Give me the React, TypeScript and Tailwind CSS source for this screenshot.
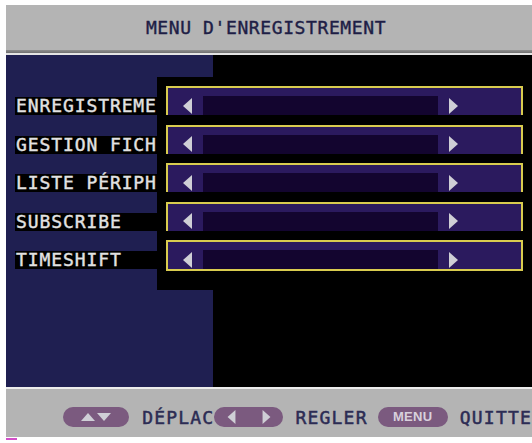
const rows = ['ENREGISTREME', 'GESTION FICH', 'LISTE PÉRIPH', 'SUBSCRIBE', 'TIMESHIFT']

function Arrow({ dir, className }: { dir: 'left' | 'right' | 'up' | 'down'; className?: string }) {
  const points = {
    left: '9,0 0,8 9,16',
    right: '0,0 9,8 0,16',
    up: '0,8 7,0 14,8',
    down: '0,0 14,0 7,8',
  }[dir]
  const vertical = dir === 'up' || dir === 'down'
  return (
    <svg
      className={className}
      width={vertical ? 14 : 9}
      height={vertical ? 8 : 16}
      viewBox={vertical ? '0 0 14 8' : '0 0 9 16'}
    >
      <polygon points={points} fill="#cfcfd6" />
    </svg>
  )
}

function Slider({ last }: { last: boolean }) {
  return (
    <div
      className={`flex h-[29px] w-[357px] flex-col border-2 border-[#d9cc4f] bg-[#2b1a5e] ${
        last ? 'h-[31px]' : 'border-b-0'
      }`}
    >
      <div className="mt-[8px] flex h-[19px]">
        <div className="flex w-[35px] items-center pl-[15px]">
          <Arrow dir="left" />
        </div>
        <div className="w-[235px] bg-[#13052f]" />
        <div className="flex flex-1 items-center pl-[11px]">
          <Arrow dir="right" />
        </div>
      </div>
    </div>
  )
}

function Pill({ children, className }: { children: React.ReactNode; className?: string }) {
  return (
    <div className={`flex h-[20px] items-center justify-center rounded-full bg-[#7b5a7f] ${className ?? ''}`}>
      {children}
    </div>
  )
}

export default function App() {
  return (
    <div className="flex h-[443px] w-[532px] flex-col overflow-hidden bg-white pl-[6px] pt-[5px] font-['DejaVu_Sans_Mono','Liberation_Mono',monospace]">
      <header className="flex h-[45px] shrink-0 items-center justify-center bg-[#b4b4b4] pr-[6px] text-[18px] tracking-[0.6px] text-[#1e1e46] [-webkit-text-stroke:0.4px_#1e1e46]">
        MENU D'ENREGISTREMENT
      </header>
      <div className="h-[3px] shrink-0 bg-gradient-to-b from-[#8e8e8e] to-[#707070]" />
      <div className="h-[2px] shrink-0 bg-[#e4e4e4]" />

      <main className="flex h-[332px] shrink-0 flex-col bg-black">
        <div className="flex h-[22px]">
          <div className="w-[207px] bg-[#1f1f51]" />
        </div>

        <div className="flex h-[213px]">
          <div className="flex w-[151px] flex-col gap-[9.5px] bg-[#1f1f51] pl-[9px] pt-[9px]">
            {rows.map((label) => (
              <div key={label} className="flex h-[29px] items-end">
                <span className="block h-[18px] w-full bg-black pl-px text-[18px] leading-[18px] tracking-[0.9px] whitespace-nowrap text-[#e2e2e2] [-webkit-text-stroke:0.4px_#e2e2e2]">
                  {label}
                </span>
              </div>
            ))}
          </div>
          <div className="flex flex-1 flex-col gap-[9.5px] bg-black pl-[9px] pt-[9px]">
            {rows.map((label, i) => (
              <Slider key={label} last={i === rows.length - 1} />
            ))}
          </div>
        </div>

        <div className="flex flex-1">
          <div className="w-[207px] bg-[#1f1f51]" />
        </div>
      </main>

      <div className="h-[2px] shrink-0 bg-[#ececec]" />
      <footer className="flex h-[48px] shrink-0 items-center whitespace-nowrap bg-[#b4b4b4] pt-[8px] text-[18px] tracking-[1.2px] text-[#2c2c54] [-webkit-text-stroke:0.5px_#2c2c54]">
        <Pill className="ml-[57px] w-[67px] gap-[2px]">
          <Arrow dir="up" />
          <Arrow dir="down" />
        </Pill>
        <span className="ml-[13px]">DÉPLAC</span>
        <Pill className="w-[70px] gap-[26px]">
          <Arrow dir="left" className="h-[14px]" />
          <Arrow dir="right" className="h-[14px]" />
        </Pill>
        <span className="ml-[12px]">REGLER</span>
        <Pill className="ml-[10px] w-[71px]">
          <span className="font-['Liberation_Sans',sans-serif] text-[13px] font-bold tracking-[0.3px] text-[#d8d0dc] [-webkit-text-stroke:0px]">
            MENU
          </span>
        </Pill>
        <span className="ml-[12px]">QUITTE</span>
      </footer>
      <div className="mt-px h-[2px] w-[11px] bg-[#d24fc8]" />
    </div>
  )
}
